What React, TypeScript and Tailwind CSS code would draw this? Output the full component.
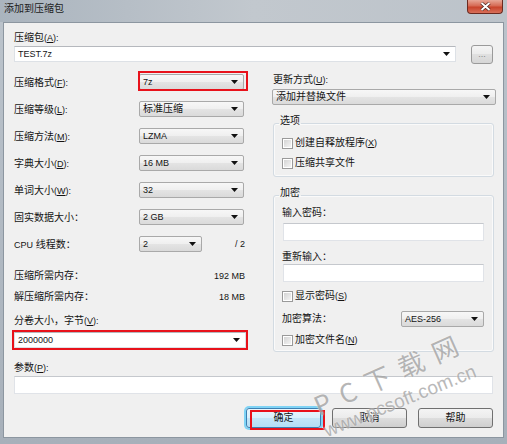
import React from 'react';

const Arrow = () => (
  <svg width="7" height="4" viewBox="0 0 7 4" className="shrink-0">
    <path d="M0 0H7L3.5 4Z" fill="#111" />
  </svg>
);

const Lat: React.FC<{ children: React.ReactNode }> = ({ children }) => (
  <span className="text-[9px]">{children}</span>
);

// Label with optional mnemonic key, e.g. 压缩格式(F):
const Label: React.FC<{ text: React.ReactNode; k?: string }> = ({ text, k }) => (
  <span className="whitespace-nowrap leading-[14px]">
    {text}
    {k ? (
      <span className="text-[9px]">
        (<span className="underline">{k}</span>):
      </span>
    ) : (
      '：'
    )}
  </span>
);

const Combo: React.FC<{ value: React.ReactNode; className?: string }> = ({ value, className = '' }) => (
  <div
    className={`h-[16px] flex items-center justify-between rounded-[2px] border border-[#a9a9a9] bg-[linear-gradient(#f7f7f7,#efefef_50%,#e4e4e4_50%,#dadada)] pl-[3px] pr-[5px] ${className}`}
  >
    <span className="leading-[14px]">{value}</span>
    <Arrow />
  </div>
);

const EditCombo: React.FC<{ value: React.ReactNode; className?: string }> = ({ value, className = '' }) => (
  <div
    className={`h-[16px] flex items-center justify-between bg-white border border-[#dde1e6] border-t-[#b5b8bd] pl-[3px] pr-[5px] ${className}`}
  >
    <span className="leading-[14px]">{value}</span>
    <Arrow />
  </div>
);

const TextBox: React.FC<{ className?: string }> = ({ className = '' }) => (
  <div className={`h-[18px] bg-white border border-[#e0e3e8] border-t-[#c5c8cd] ${className}`} />
);

const CheckBox: React.FC<{ label: React.ReactNode }> = ({ label }) => (
  <div className="flex items-center h-[14px]">
    <span className="w-[11px] h-[11px] border border-[#9a9a9a] bg-white p-[1px] shrink-0">
      <span className="block w-full h-full bg-linear-to-br from-[#d4d4d4] to-[#f4f4f4]" />
    </span>
    <span className="ml-[2px] leading-[14px]">{label}</span>
  </div>
);

const Button: React.FC<{ children: React.ReactNode; focused?: boolean }> = ({ children, focused }) => (
  <div
    className={
      focused
        ? 'w-[75px] h-[20px] flex items-center justify-center rounded-[3px] border border-[#3c7fb1] bg-[linear-gradient(#eaf6fd,#d9f0fc_50%,#c4e6f8_50%,#b3def5)] shadow-[0_0_0_2px_#7fd3f5]'
        : 'w-[75px] h-[20px] flex items-center justify-center rounded-[3px] border border-[#707070] bg-[linear-gradient(#f4f4f4,#ebebeb_50%,#dddddd_50%,#cfcfcf)]'
    }
  >
    <span className="leading-[14px]">{children}</span>
  </div>
);

const Row: React.FC<{ label: React.ReactNode; children: React.ReactNode }> = ({ label, children }) => (
  <div className="flex items-center h-[16px]">
    <div className="w-[125px]">{label}</div>
    {children}
  </div>
);

export default function App() {
  return (
    <div className="w-[507px] h-[444px] relative overflow-hidden flex flex-col bg-linear-to-b from-[#bcc4cc] to-[#a7b0ba] text-[10px] text-[#141414] font-['Liberation_Sans','Noto_Sans_CJK_SC',sans-serif]">
      {/* title bar */}
      <div className="h-[22px] flex justify-between items-start bg-linear-to-r from-[#aab4be] via-[#c2c8ce] to-[#bcc3ca]">
        <span className="pl-[4px] pt-[2px] leading-[13px] text-[#1c1c1c]">添加到压缩包</span>
        <div className="mr-[4px] w-[36px] h-[14px] rounded-b-[4px] border border-t-0 border-[#6b2a20] bg-[linear-gradient(#e7a696,#d66a54_45%,#c8432b_55%,#d8705a)] flex items-center justify-center">
          <svg width="11" height="9" viewBox="0 0 11 9">
            <path d="M1.5 1L9.5 8M9.5 1L1.5 8" stroke="#3a1a14" strokeWidth="3.2" />
            <path d="M1.5 1L9.5 8M9.5 1L1.5 8" stroke="#fff" strokeWidth="2" />
          </svg>
        </div>
      </div>

      {/* frame */}
      <div className="flex-1 flex px-[3px] pb-[6px]">
        <div className="flex-1 flex flex-col border border-[#8c96a0] bg-[#f0f0f0] pl-[10px] pr-[7px] pt-[8px]">
          <div className="leading-[13px]">
            <Label text="压缩包" k="A" />
          </div>
          <div className="flex items-start">
            <EditCombo value={<Lat>TEST.7z</Lat>} className="mt-[1px] w-[442px]" />
            <div className="ml-[15px] w-[22px] h-[19px] rounded-[3px] border border-[#9a9a9a] bg-[linear-gradient(#f4f4f4,#ebebeb_50%,#e0e0e0_50%,#d6d6d6)] flex items-center justify-center text-[9px] text-[#888] leading-none">
              ...
            </div>
          </div>

          {/* columns */}
          <div className="flex mt-[9px]">
            {/* left */}
            <div className="w-[234px] flex flex-col">
              <div className="flex flex-col gap-[11px] pt-[1px]">
                <Row label={<Label text="压缩格式" k="F" />}>
                  <div className="relative">
                    <Combo value={<Lat>7z</Lat>} className="w-[105px]" />
                    <div className="absolute left-[-1px] top-[-3px] w-[110px] h-[20px] border-2 border-[#e8121b]" />
                  </div>
                </Row>
                <Row label={<Label text="压缩等级" k="L" />}>
                  <Combo value="标准压缩" className="w-[105px]" />
                </Row>
                <Row label={<Label text="压缩方法" k="M" />}>
                  <Combo value={<Lat>LZMA</Lat>} className="w-[105px]" />
                </Row>
                <Row label={<Label text="字典大小" k="D" />}>
                  <Combo value={<Lat>16 MB</Lat>} className="w-[105px]" />
                </Row>
                <Row label={<Label text="单词大小" k="W" />}>
                  <Combo value={<Lat>32</Lat>} className="w-[105px]" />
                </Row>
                <Row label={<Label text="固实数据大小" />}>
                  <Combo value={<Lat>2 GB</Lat>} className="w-[105px]" />
                </Row>
                <Row label={<Label text={<><Lat>CPU</Lat> 线程数</>} />}>
                  <Combo value={<Lat>2</Lat>} className="w-[63px]" />
                  <span className="ml-auto mr-[3px]">
                    <Lat>/ 2</Lat>
                  </span>
                </Row>
              </div>
              <div className="w-[231px] flex justify-between leading-[14px] mt-[17px]">
                <Label text="压缩所需内存" />
                <Lat>192 MB</Lat>
              </div>
              <div className="w-[231px] flex justify-between leading-[14px] mt-[7px]">
                <Label text="解压缩所需内存" />
                <Lat>18 MB</Lat>
              </div>
              <div className="mt-[10px] leading-[14px]">
                <Label text="分卷大小，字节" k="V" />
              </div>
              <div className="relative mt-[4px] w-[232px]">
                <EditCombo value={<Lat>2000000</Lat>} />
                <div className="absolute left-[-2px] top-[-2px] w-[236px] h-[20px] border-2 border-[#e8121b]" />
              </div>
            </div>

            {/* right */}
            <div className="w-[224px] ml-[24px] flex flex-col">
              <div className="pl-[1px] leading-[14px]">
                <Label text="更新方式" k="U" />
              </div>
              <Combo value="添加并替换文件" className="mt-[2px] w-[224px]" />

              <fieldset className="mt-[9px] ml-[1px] w-[221px] border border-[#d3dbe2] rounded-[3px] shadow-[inset_0_0_0_1px_#fafafa]">
                <legend className="ml-[5px] px-[1px] leading-[14px] pb-[4px]">选项</legend>
                <div className="pl-[8px] pt-[4px] pb-[6px] flex flex-col gap-[6px]">
                  <CheckBox
                    label={
                      <>
                        创建自释放程序<Lat>(<span className="underline">X</span>)</Lat>
                      </>
                    }
                  />
                  <CheckBox label="压缩共享文件" />
                </div>
              </fieldset>

              <fieldset className="mt-[9px] ml-[1px] w-[221px] border border-[#d3dbe2] rounded-[3px] shadow-[inset_0_0_0_1px_#fafafa]">
                <legend className="ml-[5px] px-[1px] leading-[14px] pb-[4px]">加密</legend>
                <div className="pl-[8px] pr-[9px] pt-[2px] pb-[4px] flex flex-col">
                  <div className="leading-[14px]">
                    <Label text="输入密码" />
                  </div>
                  <TextBox className="mt-[3px] ml-[1px]" />
                  <div className="mt-[9px] leading-[14px]">
                    <Label text="重新输入" />
                  </div>
                  <TextBox className="ml-[1px]" />
                  <div className="mt-[7px]">
                    <CheckBox
                      label={
                        <>
                          显示密码<Lat>(<span className="underline">S</span>)</Lat>
                        </>
                      }
                    />
                  </div>
                  <div className="mt-[8px] h-[16px] flex items-center justify-between">
                    <Label text="加密算法" />
                    <Combo value={<Lat>AES-256</Lat>} className="w-[83px]" />
                  </div>
                  <div className="mt-[6px]">
                    <CheckBox
                      label={
                        <>
                          加密文件名<Lat>(<span className="underline">N</span>)</Lat>
                        </>
                      }
                    />
                  </div>
                </div>
              </fieldset>
            </div>
          </div>

          {/* parameters */}
          <div className="mt-[9px] leading-[14px]">
            <Label text="参数" k="P" />
          </div>
          <TextBox className="mt-[1px] w-[479px]" />

          {/* buttons */}
          <div className="mt-[14px] w-[479px] flex justify-end gap-[11px]">
            <div className="relative">
              <Button focused>确定</Button>
              <div className="absolute left-[4px] top-[2px] w-[75px] h-[20px] border-2 border-[#e8121b]" />
            </div>
            <Button>取消</Button>
            <Button>帮助</Button>
          </div>
        </div>
      </div>

      {/* watermark */}
      <div className="absolute left-[320px] top-[392px] origin-bottom-left -rotate-[24deg] pointer-events-none whitespace-nowrap text-[26px] leading-none tracking-[11px] text-[#a4a4a4] opacity-80 font-['Noto_Sans_CJK_SC',sans-serif] [text-shadow:0_0_2px_#fff]">
        PC下载网
      </div>
      <div className="absolute left-[328px] top-[421px] origin-bottom-left -rotate-[22deg] pointer-events-none whitespace-nowrap text-[19px] leading-none text-[#a8a8a8] opacity-80 font-['Liberation_Sans',sans-serif] [text-shadow:0_0_2px_#fff]">
        www.pcsoft.com.cn
      </div>
    </div>
  );
}
